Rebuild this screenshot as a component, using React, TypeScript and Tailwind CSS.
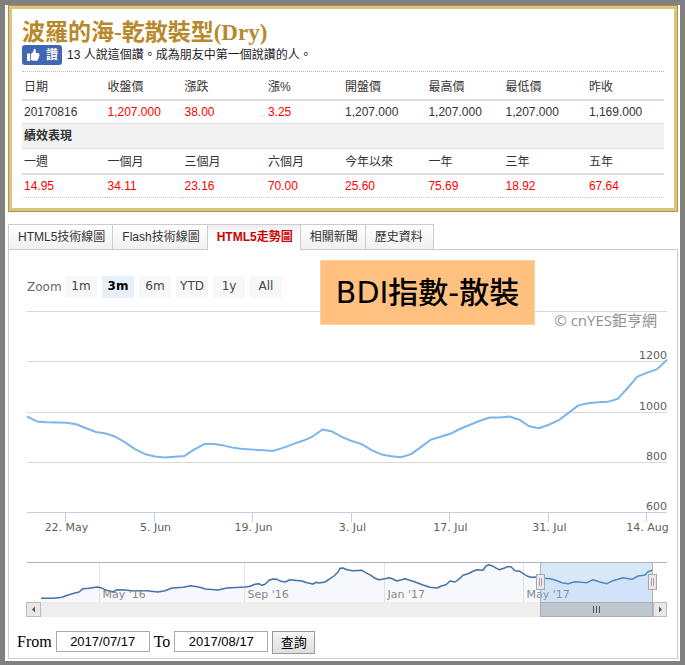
import { useState } from "react";

const priceHeaders = ["日期", "收盤價", "漲跌", "漲%", "開盤價", "最高價", "最低價", "昨收"];
const priceCells = ["20170816", "1,207.000", "38.00", "3.25", "1,207.000", "1,207.000", "1,207.000", "1,169.000"];
const perfHeaders = ["一週", "一個月", "三個月", "六個月", "今年以來", "一年", "三年", "五年"];
const perfCells = ["14.95", "34.11", "23.16", "70.00", "25.60", "75.69", "18.92", "67.64"];

const tabs = ["HTML5技術線圖", "Flash技術線圖", "HTML5走勢圖", "相關新聞", "歷史資料"];
const ranges = ["1m", "3m", "6m", "YTD", "1y", "All"];

/* Daily BDI closes for the selected three months */
const closes = [
    982, 962, 959, 958, 957, 951, 935, 920, 914, 901, 878, 851, 832, 823, 819, 822, 825, 851, 872, 872, 866, 857,
    852, 850, 848, 845, 857, 872, 885, 902, 930, 922, 900, 884, 872, 848, 831, 824, 820, 832, 860, 889, 901, 913,
    933, 949, 965, 978, 978, 982, 969, 943, 935, 949, 967, 996, 1026, 1034, 1038, 1040, 1052, 1095, 1140, 1156,
    1170, 1207,
];

const gridLines = [13.5, 63.5, 114.5, 164.5];
const yLabels = [
    { text: "1200", y: 61 },
    { text: "1000", y: 112 },
    { text: "800", y: 162 },
    { text: "600", y: 212 },
];
const xTicks = [
    { text: "22. May", x: 39.5 },
    { text: "5. Jun", x: 128.5 },
    { text: "19. Jun", x: 226.5 },
    { text: "3. Jul", x: 325.5 },
    { text: "17. Jul", x: 423.5 },
    { text: "31. Jul", x: 522.5 },
    { text: "14. Aug", x: 620.5 },
];
const navTicks = [
    { text: "May '16", x: 73.5 },
    { text: "Sep '16", x: 218.5 },
    { text: "Jan '17", x: 358.5 },
    { text: "May '17", x: 497.5 },
];

const navPoints =
    "15,300.3 27,300.3 32,299.7 36,299.3 42,297 49,295 53,294 57,290.7 63,290.3 71,289 75,289.7 79,291.7 87,294 91,291.7 99,292 106,292.7 121,292.7 132,294 139,292.7 146,290 157,289.3 165,287.7 174,289.3 179,291 192,292 201,290 219,289 224,288.3 229,286.3 233,285.7 236,287.3 239,286.3 243,282.3 247,281 251,281.3 255,283.3 259,284 264,281.7 276,283 281,284.7 287,286 290,284.3 293,285 299,284 304,280.7 308,278 312,274 314,270.3 317,270 321,271.7 327,272.7 336,272.3 341,275.3 345,277.3 349,280.3 353,281.7 359,280.7 363,279.7 367,281 371,283 379,280.7 387,283.3 397,287 404,289.3 411,290 416,287.7 420,286.7 424,283 429,284 434,280.3 437,277.3 442,275.7 447,273.3 451,271.7 457,272.3 460,268 463,266.7 467,268.3 473,271.7 478,270.3 481,268.7 485,268.7 489,272.7 494,273.3 497,275.3 501,278 505,279.3 514,279 519,280.3 524,280.7 529,282 536,284.7 542,285.7 549,283.7 561,284.7 567,281.7 574,284 581,285.7 587,282.7 597,279.7 606,281.3 612,278 619,277 622,273.7 626,272.3";

function ThumbIcon() {
    return (
        <svg viewBox="0 0 14 14" className="size-3.5" fill="#fff" aria-hidden="true">
            <path d="M1 5.500h3.200V13H1zM5 6C6.800 4.800 7.600 3.300 7.800 1.600c.1-.7.600-.9 1.100-.7 1.100.5 1.300 1.900.7 4.100h2.800c.9 0 1.300.9.8 1.600.5.600.4 1.400-.2 1.800.2.700 0 1.300-.5 1.600.1.600-.1 1-.5 1.300.1.900-.4 1.400-1.300 1.400H7.600C6.500 12.700 5.800 12.500 5 12z" />
        </svg>
    );
}

function QuoteTable() {
    return (
        <table className="mt-1.5 w-full table-fixed border-separate border-spacing-0 border-t border-dotted border-[#bbb] text-left text-xs text-[#333]">
            <colgroup>
                {priceHeaders.map((header, i) => (
                    <col key={header} className={i % 2 === 0 ? "w-[13%]" : "w-[12%]"} />
                ))}
            </colgroup>
            <tbody>
                <tr className="h-[29px]">
                    {priceHeaders.map((header) => (
                        <th key={header} scope="col" className="border-b-2 border-[#ddd] px-0.5 pt-0.5 font-normal">
                            {header}
                        </th>
                    ))}
                </tr>
                <tr className="h-[23px]">
                    {priceCells.map((value, i) => (
                        <td
                            key={i}
                            className={`border-b border-[#ddd] px-0.5 ${i > 0 && i < 4 ? "text-[#f00]" : ""}`}
                        >
                            {value}
                        </td>
                    ))}
                </tr>
                <tr className="h-[25px]">
                    <th colSpan={8} className="border-b border-[#ddd] bg-[#f2f2f2] px-0.5 font-bold">
                        績效表現
                    </th>
                </tr>
                <tr className="h-[26px]">
                    {perfHeaders.map((header) => (
                        <th key={header} scope="col" className="border-b-2 border-[#ddd] px-0.5 pt-0.5 font-normal">
                            {header}
                        </th>
                    ))}
                </tr>
                <tr className="h-[23px]">
                    {perfCells.map((value) => (
                        <td key={value} className="border-b border-dotted border-[#ccc] px-0.5 text-[#f00]">
                            {value}
                        </td>
                    ))}
                </tr>
            </tbody>
        </table>
    );
}

function TrendChart() {
    const line = closes
        .map((value, i) => `${1 + (i * 640) / (closes.length - 1)},${214.5 - (value - 600) * 0.2515}`)
        .join(" ");

    return (
        <svg
            viewBox="0 0 642 319"
            className="block w-full font-['DejaVu_Sans','Noto_Sans_CJK_TC',sans-serif]"
            role="img"
            aria-label="BDI"
        >
            {/* Price pane */}
            {gridLines.map((y) => (
                <line key={y} x1="1" x2="641" y1={y} y2={y} stroke="#d8d8d8" />
            ))}
            <line x1="1" x2="641" y1="214.5" y2="214.5" stroke="#c0d0e0" />
            {xTicks.map(({ text, x }) => (
                <g key={text}>
                    <line x1={x} x2={x} y1="215" y2="224" stroke="#c0d0e0" />
                    <text x={x + 1} y="233" textAnchor="middle" fontSize="11" fill="#606060">
                        {text}
                    </text>
                </g>
            ))}
            <text
                x="631"
                y="28"
                textAnchor="end"
                fontSize="15"
                fill="#909090"
                className="font-['Open_Sans','Noto_Sans_CJK_TC',sans-serif]"
            >
                © cnYES鉅亨網
            </text>
            <polyline points={line} fill="none" stroke="#7cb5ec" strokeWidth="2" strokeLinejoin="round" />
            {yLabels.map(({ text, y }) => (
                <text key={text} x="641" y={y} textAnchor="end" fontSize="11" fill="#606060">
                    {text}
                </text>
            ))}

            {/* Navigator */}
            {navTicks.map(({ text, x }) => (
                <line key={text} x1={x} x2={x} y1="265" y2="304" stroke="#e6e6e6" />
            ))}
            <polygon points={`15,304 ${navPoints} 626,304`} fill="#4572c8" fillOpacity="0.05" />
            <polyline points={navPoints} fill="none" stroke="#4572a7" strokeWidth="1.5" strokeLinejoin="round" />
            {navTicks.map(({ text, x }) => (
                <text key={text} x={x + 3} y="300" fontSize="11" fill="#888">
                    {text}
                </text>
            ))}
            <rect x="514" y="265" width="113" height="39" fill="#7cb5ec" fillOpacity="0.3" />
            <path d="M1 264.500H641M514.500 265V304M626.500 265V304" stroke="#b2b1b6" fill="none" />
            {[514.5, 626.5].map((x) => (
                <g key={x} stroke="#aaa">
                    <rect x={x - 4} y="276.500" width="8" height="15" fill="#ebe7e8" />
                    <path d={`M${x - 1} 280v8M${x + 1} 280v8`} />
                </g>
            ))}

            {/* Scrollbar */}
            <rect x="15" y="304" width="499" height="15" fill="#eee" />
            <rect x="514.500" y="304.500" width="112" height="14" fill="#bfc8d1" stroke="#aaaeb4" />
            <path d="M567.500 308v7M570.500 308v7M573.500 308v7" stroke="#555" />
            <rect x="0.500" y="304.500" width="14" height="14" fill="#ebe7e8" stroke="#bbb" />
            <rect x="627.500" y="304.500" width="13" height="14" fill="#ebe7e8" stroke="#bbb" />
            <path d="M9 308.500v6l-3-3zM633 308.500v6l3-3z" fill="#555" />
        </svg>
    );
}

export default function App() {
    const [activeTab, setActiveTab] = useState("HTML5走勢圖");
    const [range, setRange] = useState("3m");

    return (
        <div className="bg-[#808080] px-[5px] pt-[5px] pb-1 font-['Liberation_Sans','Noto_Sans_CJK_TC',sans-serif]">
            <main className="bg-white pr-0.5 pb-0.5 pl-[3px]">
                <section className="border border-[#b8962e]">
                    <div className="border-3 border-[#d9c487] px-2.5 pt-[11px] pb-2.5">
                        <h1 className="font-['Liberation_Serif','Noto_Sans_CJK_TC',serif] text-[23px] leading-[25px] font-bold text-[#b8892b]">
                            波羅的海-乾散裝型(Dry)
                        </h1>
                        <div className="flex h-5 items-center gap-[5px] text-xs text-[#1d2129]">
                            <button
                                type="button"
                                className="flex h-5 items-center gap-1.5 rounded-[3px] bg-[#4267b2] px-1 font-bold text-white"
                            >
                                <ThumbIcon />讚
                            </button>
                            <span>13 人說這個讚。成為朋友中第一個說讚的人。</span>
                        </div>
                        <QuoteTable />
                    </div>
                </section>

                <nav className="mt-3 flex text-xs">
                    {tabs.map((tab) => (
                        <a
                            key={tab}
                            href="#"
                            onClick={() => setActiveTab(tab)}
                            className={`h-[25px] border-t border-l border-[#ccc] pr-[7px] pl-[9px] leading-6 whitespace-nowrap last:border-r last:pr-2.5 ${
                                tab === activeTab
                                    ? "z-10 -mb-px h-[26px] bg-linear-to-b from-[#efefef] to-white to-50% font-bold text-[#c00]"
                                    : "bg-linear-to-b from-white to-[#f0f0f0] text-[#333]"
                            }`}
                        >
                            {tab}
                        </a>
                    ))}
                </nav>

                <section className="relative border border-[#ccc] pt-[26px] pb-1">
                    <div className="flex items-center gap-[5px] pl-[18px] font-['DejaVu_Sans',sans-serif] text-xs">
                        <span className="w-[33px] text-[#666]">Zoom</span>
                        {ranges.map((label) => (
                            <button
                                key={label}
                                type="button"
                                onClick={() => setRange(label)}
                                className={`h-[22px] w-8 pb-0.5 ${
                                    label === range ? "bg-[#e7f0f9] font-bold text-black" : "bg-[#f7f7f7] text-[#444]"
                                }`}
                            >
                                {label}
                            </button>
                        ))}
                    </div>

                    <div className="pr-[9px] pl-[17px]">
                        <TrendChart />
                    </div>

                    {/* Sticky note laid over the chart */}
                    <div className="absolute top-2.5 left-[311px] flex h-[65px] w-[215px] items-center justify-center border border-[#ffd0a0] bg-[#ffc080] font-['DejaVu_Sans','Noto_Sans_CJK_TC',sans-serif] text-[30px] font-medium whitespace-nowrap text-black">
                        BDI指數-散裝
                    </div>

                    <form
                        className="mt-3.5 flex h-[23px] gap-1 pl-2 text-black"
                        onSubmit={(event) => event.preventDefault()}
                    >
                        <label htmlFor="from" className="font-['Liberation_Serif',serif] text-base leading-[21px]">
                            From
                        </label>
                        <input
                            id="from"
                            type="text"
                            defaultValue="2017/07/17"
                            className="h-[21px] w-[94px] border border-[#a9a9a9] text-center text-[13px]"
                        />
                        <label htmlFor="to" className="font-['Liberation_Serif',serif] text-base leading-[21px]">
                            To
                        </label>
                        <input
                            id="to"
                            type="text"
                            defaultValue="2017/08/17"
                            className="h-[21px] w-[94px] border border-[#a9a9a9] text-center text-[13px]"
                        />
                        <button
                            type="submit"
                            className="h-[23px] w-[43px] border border-[#999] bg-linear-to-b from-[#f6f6f6] to-[#dedede] text-[13px] leading-5"
                        >
                            查詢
                        </button>
                    </form>
                </section>
            </main>
        </div>
    );
}
